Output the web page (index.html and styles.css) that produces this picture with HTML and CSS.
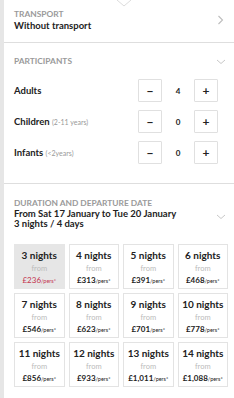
FILE: index.html
```html
<!DOCTYPE html>
<html lang="en">
<head>
  <meta charset="UTF-8">
  <meta name="viewport" content="width=device-width, initial-scale=1.0">
  <title>Booking options</title>
  <link rel="stylesheet" href="styles.css">
</head>
<body>
  <div class="page">
    <div class="panel">
      <svg class="notch" width="16" height="7" viewBox="0 0 16 7">
        <path d="M1 0 L8 6 L15 0" fill="none" stroke="#dcdcdc" stroke-width="1"/>
      </svg>

      <!-- transport -->
      <div class="section transport">
        <div class="section-head">
          <div>
            <div class="label">Transport</div>
            <div class="value">Without transport</div>
          </div>
          <svg class="chevron" width="7" height="10" viewBox="0 0 7 10">
            <path d="M1.5 1 L5.5 5 L1.5 9" fill="none" stroke="#bdbdbd" stroke-width="1.1"/>
          </svg>
        </div>
      </div>

      <!-- participants -->
      <div class="section participants">
        <div class="section-head">
          <div class="label">Participants</div>
          <svg class="chevron" width="10" height="6" viewBox="0 0 10 6">
            <path d="M1 1 L5 4.5 L9 1" fill="none" stroke="#c8c8c8" stroke-width="1"/>
          </svg>
        </div>
        <div class="people">
          <div class="person">
            <span class="person-name">Adults</span>
            <div class="stepper">
              <button class="step-btn">&minus;</button>
              <span class="step-value">4</span>
              <button class="step-btn">+</button>
            </div>
          </div>
          <div class="person">
            <span class="person-name">Children <small>(2-11 years)</small></span>
            <div class="stepper">
              <button class="step-btn">&minus;</button>
              <span class="step-value">0</span>
              <button class="step-btn">+</button>
            </div>
          </div>
          <div class="person">
            <span class="person-name">Infants <small>(&lt;2years)</small></span>
            <div class="stepper">
              <button class="step-btn">&minus;</button>
              <span class="step-value">0</span>
              <button class="step-btn">+</button>
            </div>
          </div>
        </div>
      </div>

      <!-- duration -->
      <div class="section duration">
        <div class="section-head">
          <div>
            <div class="label">Duration and departure date</div>
            <div class="value">From Sat 17 January to Tue 20 January</div>
            <div class="value">3 nights / 4 days</div>
          </div>
          <svg class="chevron" width="10" height="6" viewBox="0 0 10 6">
            <path d="M1 1 L5 4.5 L9 1" fill="none" stroke="#c8c8c8" stroke-width="1"/>
          </svg>
        </div>
        <div id="nights" class="nights"></div>
      </div>
    </div>
  </div>

  <script>
    // prix par nombre de nuits
    const prices = {
      3: '236', 4: '313', 5: '391', 6: '468',
      7: '546', 8: '623', 9: '701', 10: '778',
      11: '856', 12: '933', 13: '1,011', 14: '1,088'
    };
    const selected = 3;
    const grid = document.getElementById('nights');

    Object.keys(prices).forEach(n => {
      const tile = document.createElement('div');
      tile.className = 'night' + (Number(n) === selected ? ' selected' : '');
      tile.innerHTML = `
        <div class="night-title">${n} nights</div>
        <div class="night-from">from</div>
        <div class="night-price">£${prices[n]}<span>/pers*</span></div>
      `;
      grid.appendChild(tile);
    });
  </script>
</body>
</html>
```

FILE: styles.css
```css
body {
  margin: 0;
  font-family: Lato, 'Open Sans', Arial, sans-serif;
  color: #222;
  background-color: #fff;
}
.page {
  display: flex;
  min-height: 398px;
  background-color: #e6e6e6;
  padding-left: 4px;
}
.panel {
  flex: 1;
  background-color: #fff;
  position: relative;
}
.notch {
  position: absolute;
  top: 0;
  left: 112px;
}
.section {
  border-bottom: 1px solid #dedede;
  padding: 0 6px 0 10px;
}
.section-head {
  display: flex;
  justify-content: space-between;
  align-items: center;
}
.chevron {
  margin-right: 2px;
}
.label {
  font-size: 8.4px;
  line-height: 11px;
  font-weight: bold;
  text-transform: uppercase;
  color: #9a9a9a;
}
.value {
  font-size: 9.5px;
  line-height: 10px;
  font-weight: bold;
  color: #222;
}
.transport {
  padding-top: 9px;
  padding-bottom: 11px;
}
.transport .value {
  line-height: 11px;
}
.transport .chevron {
  margin-right: 4px;
}
.participants {
  padding-top: 13px;
  padding-bottom: 19px;
}
.people {
  margin-top: 12px;
  display: flex;
  flex-direction: column;
  gap: 8px;
}
.person {
  display: flex;
  justify-content: space-between;
  align-items: center;
  padding-right: 10px;
}
.person-name {
  font-size: 9.5px;
  font-weight: bold;
}
.person-name small {
  font-size: 7px;
  font-weight: normal;
  color: #999;
}
.stepper {
  display: flex;
  align-items: center;
}
.step-btn {
  width: 24px;
  height: 23px;
  padding: 0;
  border: 1px solid #e0e0e0;
  border-radius: 1px;
  background-color: #fff;
  font-family: Lato, Arial, sans-serif;
  font-size: 12px;
  font-weight: bold;
  color: #222;
  line-height: 1;
}
.step-value {
  width: 32px;
  text-align: center;
  font-size: 8px;
  font-weight: bold;
}
.duration {
  border-bottom: none;
  padding-top: 14px;
  padding-bottom: 10px;
}
.duration .chevron {
  margin-top: 6px;
}
.nights {
  margin-top: 15px;
  display: grid;
  grid-template-columns: repeat(4, 1fr);
  column-gap: 4px;
  row-gap: 4px;
}
.night {
  height: 45px;
  box-sizing: border-box;
  border: 1px solid #e3e3e3;
  text-align: center;
  padding-top: 4px;
}
.night.selected {
  background-color: #e6e6e6;
  border-color: #e6e6e6;
}
.night-title {
  font-size: 10px;
  line-height: 12px;
  font-weight: bold;
}
.night-from {
  margin-top: 3px;
  font-size: 7.5px;
  line-height: 10px;
  color: #bbb;
}
.night-price {
  margin-top: 1px;
  font-size: 8px;
  line-height: 11px;
  font-weight: bold;
  color: #222;
}
.night-price span {
  font-size: 5.5px;
  font-weight: normal;
}
.night.selected .night-price {
  color: #c4334f;
  font-weight: normal;
}
```
